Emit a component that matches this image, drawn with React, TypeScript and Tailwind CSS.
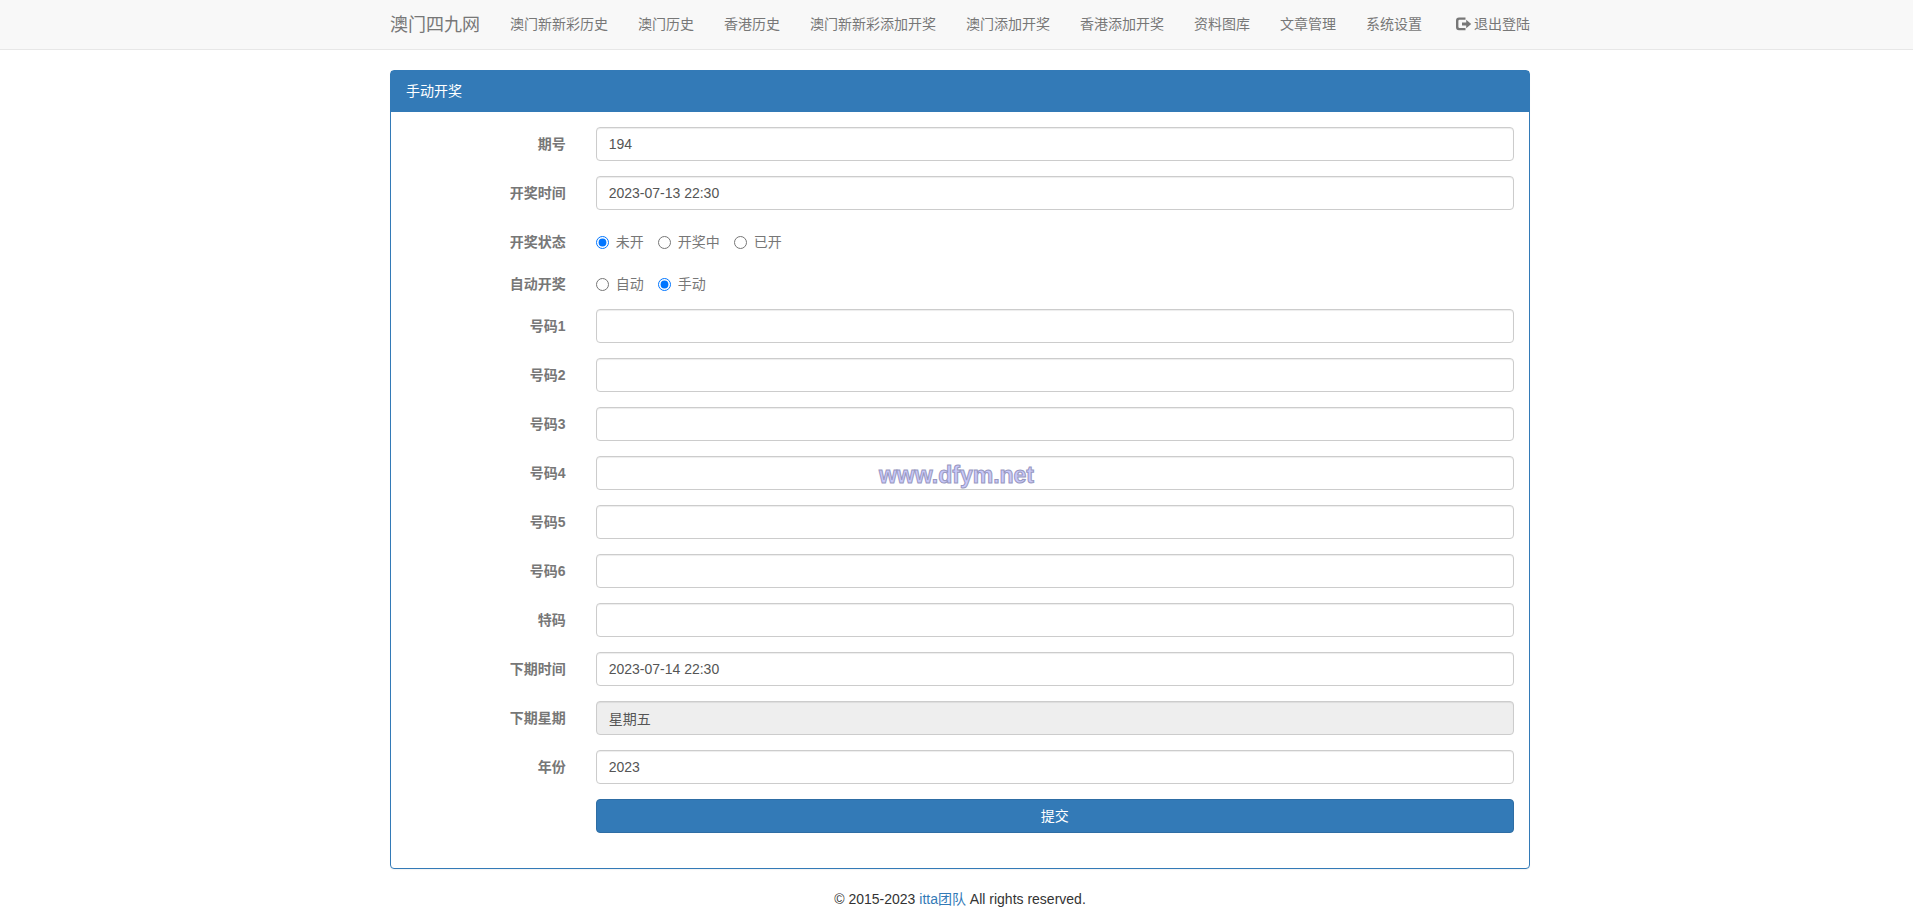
import { useState } from "react";

interface NavItem {
  label: string;
  href: string;
}

interface TextFieldProps {
  id: string;
  label: string;
  value?: string;
  disabled?: boolean;
}

interface RadioFieldProps {
  name: string;
  label: string;
  options: string[];
  initial: string;
}

const navItems: NavItem[] = [
  { label: "澳门新新彩历史", href: "#xxc-history" },
  { label: "澳门历史", href: "#am-history" },
  { label: "香港历史", href: "#xg-history" },
  { label: "澳门新新彩添加开奖", href: "#xxc-add" },
  { label: "澳门添加开奖", href: "#am-add" },
  { label: "香港添加开奖", href: "#xg-add" },
  { label: "资料图库", href: "#gallery" },
  { label: "文章管理", href: "#articles" },
  { label: "系统设置", href: "#settings" },
];

const numberFields: TextFieldProps[] = [
  { id: "num1", label: "号码1" },
  { id: "num2", label: "号码2" },
  { id: "num3", label: "号码3" },
  { id: "num4", label: "号码4" },
  { id: "num5", label: "号码5" },
  { id: "num6", label: "号码6" },
  { id: "special", label: "特码" },
];

function LogoutIcon() {
  return (
    <svg
      viewBox="0 0 16 14"
      className="w-4 h-3.5 shrink-0"
      fill="currentColor"
      aria-hidden="true"
    >
      <path d="M3 0.5H9.5V2.8H3.6Q2.4 2.8 2.4 4V9.8Q2.4 11 3.6 11H9.5V13.2H3Q0 13.2 0 10.2V3.5Q0 0.5 3 0.5Z" />
      <path d="M6 5.4H10.2V2.8L15.2 7L10.2 11.2V8.6H6Z" />
    </svg>
  );
}

function Navbar() {
  return (
    <nav className="bg-[#f8f8f8] border-b border-[#e7e7e7] pl-[7px]">
      <div className="max-w-[1170px] mx-auto px-[15px] flex items-center text-[#777]">
        <a href="#home" className="text-lg leading-5 pr-[15px] py-[14px]">
          澳门四九网
        </a>
        <ul className="flex">
          {navItems.map((item) => (
            <li key={item.href}>
              <a
                href={item.href}
                className="block px-[15px] pt-[14px] pb-[15px] leading-5 hover:text-[#333]"
              >
                {item.label}
              </a>
            </li>
          ))}
        </ul>
        <a
          href="#logout"
          className="ml-auto flex items-center gap-0.5 pt-[14px] pb-[15px] leading-5 hover:text-[#333]"
        >
          <LogoutIcon />
          退出登陆
        </a>
      </div>
    </nav>
  );
}

function TextField({ id, label, value = "", disabled }: TextFieldProps) {
  return (
    <div className="grid grid-cols-6">
      <label
        htmlFor={id}
        className="pt-[7px] px-[15px] text-right font-bold text-[#777]"
      >
        {label}
      </label>
      <div className="col-span-5 px-[15px]">
        <input
          id={id}
          type="text"
          defaultValue={value}
          disabled={disabled}
          className="block w-full h-[34px] px-3 py-1.5 leading-5 text-[#555] bg-white border border-[#ccc] rounded shadow-[inset_0_1px_1px_rgba(0,0,0,0.075)] outline-none focus:border-[#66afe9] disabled:bg-[#eee]"
        />
      </div>
    </div>
  );
}

function RadioField({ name, label, options, initial }: RadioFieldProps) {
  const [selected, setSelected] = useState(initial);

  return (
    <div
      role="radiogroup"
      aria-labelledby={`${name}-label`}
      className="grid grid-cols-6 pt-[7px] text-[#777]"
    >
      <span id={`${name}-label`} className="px-[15px] text-right font-bold">
        {label}
      </span>
      <div className="col-span-5 px-[15px] flex gap-3.5">
        {options.map((option) => (
          <label key={option} className="flex items-center gap-[7px]">
            <input
              type="radio"
              name={name}
              value={option}
              checked={selected === option}
              onChange={() => setSelected(option)}
              className="w-[13px] h-[13px]"
            />
            {option}
          </label>
        ))}
      </div>
    </div>
  );
}

export default function App() {
  return (
    <div className="relative bg-white text-sm leading-5 text-[#333] font-['Liberation_Sans','Noto_Sans_CJK_SC',sans-serif]">
      <Navbar />

      <main className="pl-[7px] pt-5">
        <div className="max-w-[1170px] mx-auto px-[15px]">
          <section className="border border-[#337ab7] rounded shadow-[0_1px_1px_rgba(0,0,0,0.05)]">
            <h1 className="bg-[#337ab7] text-white px-[15px] pt-2.5 pb-[11px]">
              手动开奖
            </h1>
            <form
              className="flex flex-col gap-[15px] pt-[15px] pb-[35px]"
              onSubmit={(e) => e.preventDefault()}
            >
              <TextField id="issue" label="期号" value="194" />
              <TextField
                id="openTime"
                label="开奖时间"
                value="2023-07-13 22:30"
              />
              <RadioField
                name="status"
                label="开奖状态"
                options={["未开", "开奖中", "已开"]}
                initial="未开"
              />
              <RadioField
                name="auto"
                label="自动开奖"
                options={["自动", "手动"]}
                initial="手动"
              />
              {numberFields.map((field) => (
                <TextField key={field.id} {...field} />
              ))}
              <TextField
                id="nextTime"
                label="下期时间"
                value="2023-07-14 22:30"
              />
              <TextField
                id="nextWeek"
                label="下期星期"
                value="星期五"
                disabled
              />
              <TextField id="year" label="年份" value="2023" />
              <div className="grid grid-cols-6">
                <div className="col-span-5 col-start-2 px-[15px]">
                  <button
                    type="submit"
                    className="block w-full h-[34px] text-white bg-[#337ab7] border border-[#2e6da4] rounded cursor-pointer hover:bg-[#286090]"
                  >
                    提交
                  </button>
                </div>
              </div>
            </form>
          </section>

          <footer className="py-5 text-center">
            © 2015-2023{" "}
            <a href="#team" className="text-[#337ab7] hover:underline">
              itta团队
            </a>{" "}
            All rights reserved.
          </footer>
        </div>
      </main>

      <div className="absolute inset-x-0 top-[460px] text-center text-[23px] leading-[30px] font-bold text-[#c8c8fa] [-webkit-text-stroke:1px_#9898c0] pointer-events-none">
        www.dfym.net
      </div>
    </div>
  );
}
